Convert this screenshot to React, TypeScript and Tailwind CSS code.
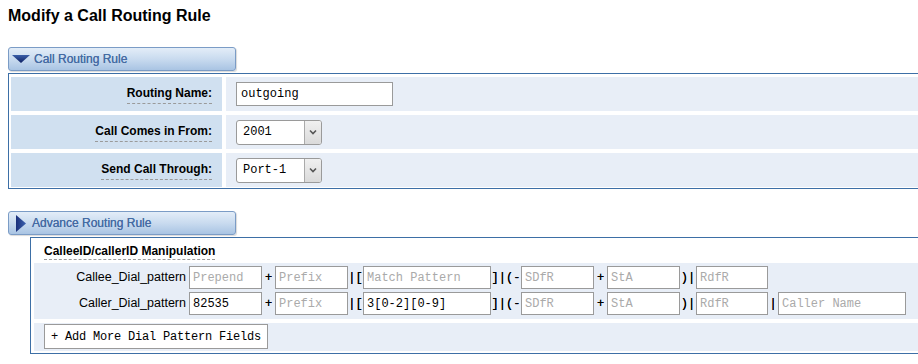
import React from 'react';

// Collapsible section header tab (gradient bar with a triangle)
const SectionTab: React.FC<{ title: string; open: boolean }> = ({ title, open }) => (
  <div className="ml-[8px] flex h-[24px] w-[228px] items-center rounded-[3px] border border-[#7b9cc6] bg-gradient-to-b from-[#e3edf8] via-[#c9dbef] to-[#a9c4e3] shadow-[1px_1px_1px_rgba(0,0,0,0.15)]">
    {open ? (
      <svg width="20" height="10" viewBox="0 0 20 10" className="ml-[2px]">
        <defs>
          <linearGradient id="tdown" x1="0" y1="0" x2="0" y2="1">
            <stop offset="0" stopColor="#3b5fa8" />
            <stop offset="1" stopColor="#0d1f63" />
          </linearGradient>
        </defs>
        <polygon points="1,1 19,1 10,9" fill="url(#tdown)" />
      </svg>
    ) : (
      <svg width="12" height="19" viewBox="0 0 12 19" className="ml-[6px]">
        <defs>
          <linearGradient id="tright" x1="0" y1="0" x2="1" y2="0">
            <stop offset="0" stopColor="#1a2f7a" />
            <stop offset="1" stopColor="#3d63b0" />
          </linearGradient>
        </defs>
        <polygon points="1,1 11,9.5 1,18" fill="url(#tright)" />
      </svg>
    )}
    <span className={`${open ? 'ml-[3px]' : 'ml-[5px]'} text-[12px] text-[#456ba3] [text-shadow:0_0_0.3px_#456ba3]`}>{title}</span>
  </div>
);

const FieldLabel: React.FC<{ text: string }> = ({ text }) => (
  <span className="border-b border-dashed border-[#9a9a9a] pb-[1px] text-[12px] font-bold text-black">{text}</span>
);

const FakeSelect: React.FC<{ value: string }> = ({ value }) => (
  <div className="flex h-[25px] w-[86px] items-stretch overflow-hidden rounded-[3px] border border-[#9a9a9a] bg-white">
    <div className="flex flex-1 items-center pl-[6px] font-['Liberation_Mono',monospace] text-[12px] text-black">{value}</div>
    <div className="flex w-[17px] items-center justify-center border-l border-[#aaa] bg-gradient-to-b from-[#f0f0f0] to-[#dadada]">
      <svg width="8" height="6" viewBox="0 0 8 6">
        <path d="M1 1.5 L4 4.5 L7 1.5" stroke="#555" strokeWidth="1.6" fill="none" />
      </svg>
    </div>
  </div>
);

const rows: { label: string; control: React.ReactNode }[] = [
  {
    label: 'Routing Name:',
    control: (
      <div className="flex h-[24px] w-[157px] items-center border border-[#9a9a9a] bg-white pl-[4px] font-['Liberation_Mono',monospace] text-[12px] text-black">
        outgoing
      </div>
    ),
  },
  { label: 'Call Comes in From:', control: <FakeSelect value="2001" /> },
  { label: 'Send Call Through:', control: <FakeSelect value="Port-1" /> },
];

const Box: React.FC<{ w: number; value?: string; placeholder: string }> = ({ w, value, placeholder }) => (
  <div
    className={`flex h-[23px] shrink-0 items-center border border-[#9a9a9a] bg-white pl-[3px] font-['Liberation_Mono',monospace] text-[12px] ${value ? 'text-black' : 'text-[#aaaaaa]'}`}
    style={{ width: w }}
  >
    {value ?? placeholder}
  </div>
);

const Sep: React.FC<{ w: number; text: string }> = ({ w, text }) => (
  <span className="shrink-0 text-center font-['Liberation_Mono',monospace] text-[12px] text-black [text-shadow:0_0_0.4px_#000]" style={{ width: w }}>
    {text}
  </span>
);

const DialRow: React.FC<{ label: string; prepend?: string; match?: string; callerName?: boolean }> = ({ label, prepend, match, callerName }) => (
  <div className="flex items-center">
    <span className="w-[155px] shrink-0 pr-[3px] text-right text-[12.5px] text-black">{label}</span>
    <Box w={73} value={prepend} placeholder="Prepend" />
    <Sep w={13} text="+" />
    <Box w={73} placeholder="Prefix" />
    <Sep w={15} text="|[" />
    <Box w={128} value={match} placeholder="Match Pattern" />
    <Sep w={30} text="]|(-" />
    <Box w={73} placeholder="SDfR" />
    <Sep w={13} text="+" />
    <Box w={73} placeholder="StA" />
    <Sep w={16} text=")|" />
    <Box w={72} placeholder="RdfR" />
    {callerName && (
      <>
        <Sep w={10} text="|" />
        <Box w={128} placeholder="Caller Name" />
      </>
    )}
  </div>
);

export default function App() {
  return (
    <div className="h-[364px] w-[918px] overflow-hidden bg-white font-['Liberation_Sans',Arial,sans-serif]">
      <h1 className="pl-[8px] pt-[6px] text-[16px] font-bold leading-[20px] text-black">Modify a Call Routing Rule</h1>

      {/* Call Routing Rule */}
      <div className="mt-[21px]">
        <SectionTab title="Call Routing Rule" open />
        <div className="ml-[8px] mt-[2px] flex flex-col gap-[4px] border-y border-l border-[#3d6fa6] pb-[1px] pl-[2px] pt-[3px]">
          {rows.map((r) => (
            <div key={r.label} className="flex h-[34px] gap-[4px]">
              <div className="flex w-[211px] items-center justify-end bg-[#d0e0f0] pr-[10px]">
                <FieldLabel text={r.label} />
              </div>
              <div className="flex flex-1 items-center bg-[#e8eef7] pl-[10px]">{r.control}</div>
            </div>
          ))}
        </div>
      </div>

      {/* Advance Routing Rule */}
      <div className="mt-[22px]">
        <SectionTab title="Advance Routing Rule" open={false} />
        <div className="ml-[30px] mt-[2px] border-y border-l border-[#3d6fa6] pb-[2px] pl-[3px]">
          <div className="pl-[10px] pt-[5px] leading-[14px]">
            <FieldLabel text="CalleeID/callerID Manipulation" />
          </div>
          <div className="mt-[5px] flex flex-col gap-[3px] bg-[#e8eef7] pb-[4px] pt-[3px]">
            <DialRow label="Callee_Dial_pattern" />
            <DialRow label="Caller_Dial_pattern" prepend="82535" match="3[0-2][0-9]" callerName />
          </div>
          <div className="mt-[4px] flex h-[28px] items-start bg-[#e8eef7] pl-[10px] pt-[1px]">
            <div className="flex h-[25px] items-center border border-[#9a9a9a] bg-white px-[6px] font-['Liberation_Mono',monospace] text-[12px] tracking-[-0.2px] text-black">
              + Add More Dial Pattern Fields
            </div>
          </div>
        </div>
      </div>
    </div>
  );
}
